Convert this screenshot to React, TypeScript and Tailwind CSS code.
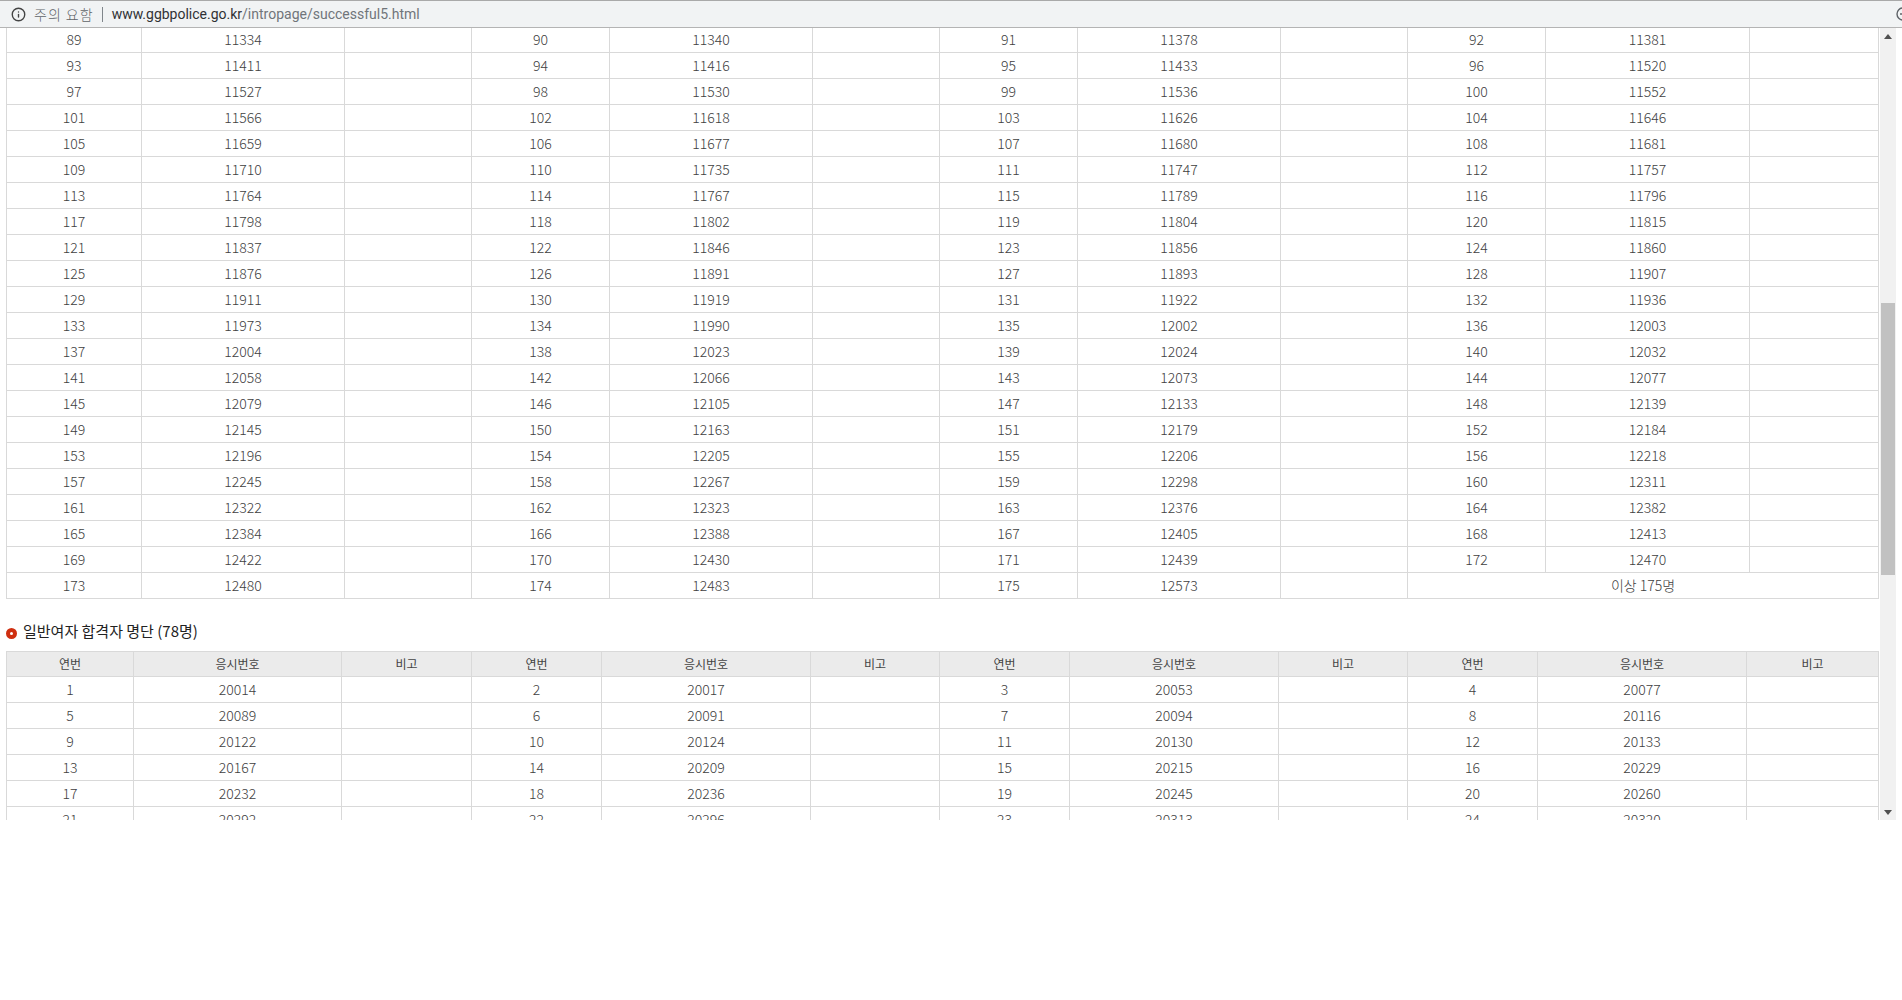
import { Info } from 'lucide-react';

type Entry = [number, number];

const firstRows: Entry[][] = [
  [[89, 11334], [90, 11340], [91, 11378], [92, 11381]],
  [[93, 11411], [94, 11416], [95, 11433], [96, 11520]],
  [[97, 11527], [98, 11530], [99, 11536], [100, 11552]],
  [[101, 11566], [102, 11618], [103, 11626], [104, 11646]],
  [[105, 11659], [106, 11677], [107, 11680], [108, 11681]],
  [[109, 11710], [110, 11735], [111, 11747], [112, 11757]],
  [[113, 11764], [114, 11767], [115, 11789], [116, 11796]],
  [[117, 11798], [118, 11802], [119, 11804], [120, 11815]],
  [[121, 11837], [122, 11846], [123, 11856], [124, 11860]],
  [[125, 11876], [126, 11891], [127, 11893], [128, 11907]],
  [[129, 11911], [130, 11919], [131, 11922], [132, 11936]],
  [[133, 11973], [134, 11990], [135, 12002], [136, 12003]],
  [[137, 12004], [138, 12023], [139, 12024], [140, 12032]],
  [[141, 12058], [142, 12066], [143, 12073], [144, 12077]],
  [[145, 12079], [146, 12105], [147, 12133], [148, 12139]],
  [[149, 12145], [150, 12163], [151, 12179], [152, 12184]],
  [[153, 12196], [154, 12205], [155, 12206], [156, 12218]],
  [[157, 12245], [158, 12267], [159, 12298], [160, 12311]],
  [[161, 12322], [162, 12323], [163, 12376], [164, 12382]],
  [[165, 12384], [166, 12388], [167, 12405], [168, 12413]],
  [[169, 12422], [170, 12430], [171, 12439], [172, 12470]],
];

const secondRows: Entry[][] = [
  [[1, 20014], [2, 20017], [3, 20053], [4, 20077]],
  [[5, 20089], [6, 20091], [7, 20094], [8, 20116]],
  [[9, 20122], [10, 20124], [11, 20130], [12, 20133]],
  [[13, 20167], [14, 20209], [15, 20215], [16, 20229]],
  [[17, 20232], [18, 20236], [19, 20245], [20, 20260]],
  [[21, 20292], [22, 20296], [23, 20313], [24, 20320]],
];

const firstCols = [
  'w-[135px]', 'w-[203px]', 'w-[127px]', 'w-[138px]', 'w-[203px]', 'w-[127px]',
  'w-[138px]', 'w-[203px]', 'w-[127px]', 'w-[138px]', 'w-[204px]', 'w-[129px]',
];

const secondCols = [
  'w-[127px]', 'w-[208px]', 'w-[130px]', 'w-[130px]', 'w-[209px]', 'w-[129px]',
  'w-[130px]', 'w-[209px]', 'w-[129px]', 'w-[130px]', 'w-[209px]', 'w-[132px]',
];

const cell = 'h-[26px] border border-[#d9d9d9] p-0 text-center align-middle';
const headCell = 'h-[25px] border border-[#d9d9d9] bg-[#ebebeb] p-0 text-center align-middle text-[12px] font-normal text-[#444]';
const heads = ['연번', '응시번호', '비고'];

function EntryRow({ entries }: { entries: Entry[] }) {
  return (
    <tr>
      {entries.map(([no, exam]) => [
        <td key={`${no}-no`} className={cell}>{no}</td>,
        <td key={`${no}-exam`} className={cell}>{exam}</td>,
        <td key={`${no}-note`} className={cell} />,
      ])}
    </tr>
  );
}

function ColGroup({ cols }: { cols: string[] }) {
  return (
    <colgroup>
      {cols.map((col, i) => (
        <col key={i} className={col} />
      ))}
    </colgroup>
  );
}

function ScrollArrow({ down }: { down?: boolean }) {
  return (
    <div className="flex h-[16px] items-center justify-center">
      <svg width="8" height="5" viewBox="0 0 8 5" className={down ? 'rotate-180' : ''}>
        <path d="M4 0 8 5H0z" fill="#505050" />
      </svg>
    </div>
  );
}

export default function App() {
  return (
    <div className="min-h-screen bg-white font-['Noto_Sans_CJK_KR','Noto_Sans',sans-serif] text-[14px] font-light text-[#404040]">
      <header className="flex h-[28px] items-center overflow-hidden border-y border-t-[#a9a9a9] border-b-[#b4b4b4] bg-[#f1f3f4] pl-[11px]">
        <Info size={15} strokeWidth={2.2} className="flex-none text-[#444]" />
        <span className="ml-[8px] text-[14px] tracking-[1px] text-[#5f6368]">주의 요함</span>
        <span className="ml-[8px] h-[15px] w-px bg-[#80868b]" />
        <span className="ml-[9px] font-['Roboto',sans-serif] text-[14px] font-normal text-[#303134]">www.ggbpolice.go.kr</span>
        <span className="font-['Roboto',sans-serif] text-[14px] font-normal text-[#70757a]">/intropage/successful5.html</span>
        <svg width="16" height="16" viewBox="0 0 16 16" className="ml-auto mr-[-9px] flex-none" fill="none" stroke="#5f6368" strokeWidth="1.4">
          <circle cx="8" cy="8" r="6" />
          <path d="M5 8h6" />
        </svg>
      </header>

      <div className="flex h-[792px]">
        <main className="h-full w-[1880px] overflow-hidden pl-[6px]">
          <table className="mt-[-2px] w-[1873px] table-fixed border-collapse">
            <ColGroup cols={firstCols} />
            <tbody>
              {firstRows.map((entries) => (
                <EntryRow key={entries[0][0]} entries={entries} />
              ))}
              <tr>
                <td className={cell}>173</td>
                <td className={cell}>12480</td>
                <td className={cell} />
                <td className={cell}>174</td>
                <td className={cell}>12483</td>
                <td className={cell} />
                <td className={cell}>175</td>
                <td className={cell}>12573</td>
                <td className={cell} />
                <td className={cell} colSpan={3}>이상 175명</td>
              </tr>
            </tbody>
          </table>

          <h3 className="mt-[22px] flex h-[20px] items-center text-[15px] font-normal text-[#222]">
            <span className="mt-[5px] h-[11px] w-[11px] rounded-full border-[4px] border-[#cf2f10]" />
            <span className="ml-[6px]">일반여자 합격자 명단 (78명)</span>
          </h3>

          <table className="mt-[10px] w-[1873px] table-fixed border-collapse">
            <ColGroup cols={secondCols} />
            <thead>
              <tr>
                {[0, 1, 2, 3].map((group) =>
                  heads.map((head) => (
                    <th key={`${group}-${head}`} className={headCell}>
                      {head}
                    </th>
                  )),
                )}
              </tr>
            </thead>
            <tbody>
              {secondRows.map((entries) => (
                <EntryRow key={entries[0][0]} entries={entries} />
              ))}
            </tbody>
          </table>
        </main>

        <aside className="flex h-full w-[16px] flex-col bg-[#f1f1f1]">
          <ScrollArrow />
          <div className="mx-px mt-[259px] h-[272px] flex-none bg-[#c1c1c1]" />
          <div className="flex-1" />
          <ScrollArrow down />
        </aside>
      </div>
    </div>
  );
}
